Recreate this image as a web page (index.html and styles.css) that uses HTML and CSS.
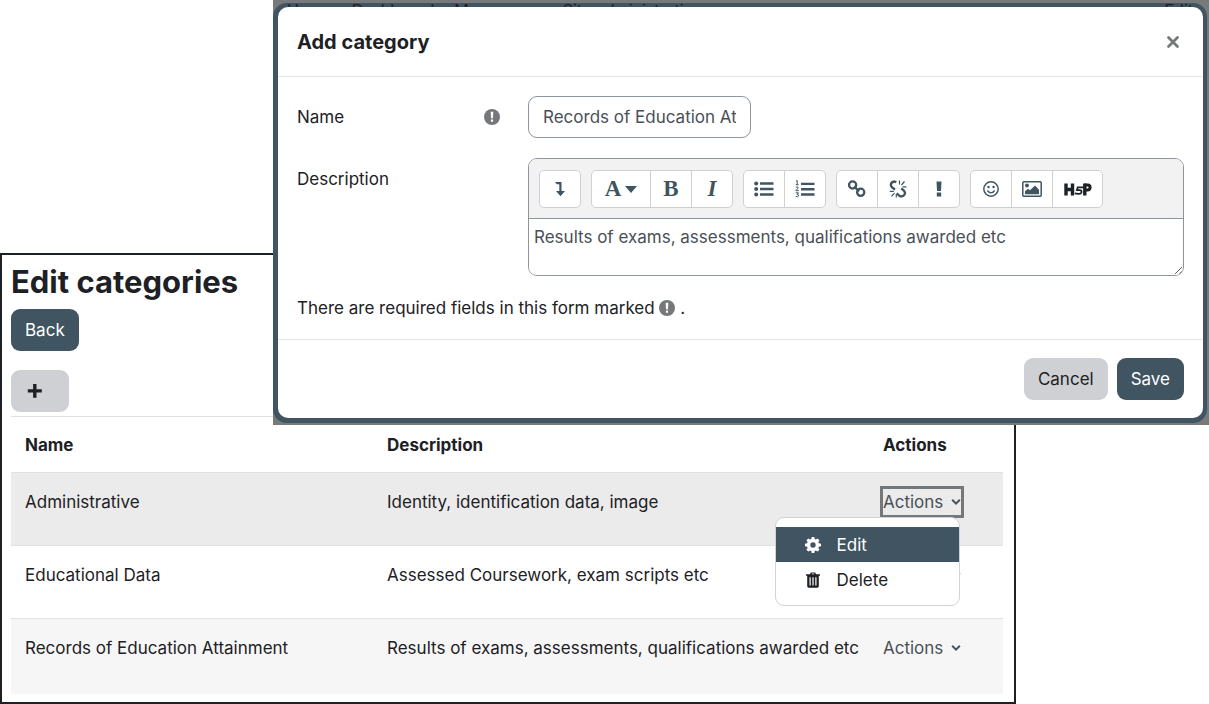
FILE: index.html
```
<!DOCTYPE html>
<html lang="en">
<head>
<meta charset="utf-8">
<title>Edit categories</title>
<link rel="stylesheet" href="styles.css">
</head>
<body>
<main class="page">
  <h1 class="page-title">Edit categories</h1>
  <button class="btn btn-primary" type="button">Back</button>
  <button class="btn btn-secondary btn-add" type="button" aria-label="Add category">
    <svg class="icon" viewBox="0 0 16 16"><path d="M6.100 1h3.400v5.200h5.300v3.400H9.500v5.200H6.100V9.600H.8V6.200h5.300z" fill="currentColor"/></svg>
  </button>
  <table class="categories">
    <thead>
      <tr><th class="col-name">Name</th><th class="col-desc">Description</th><th>Actions</th></tr>
    </thead>
    <tbody>
      <tr class="row-hover">
        <td>Administrative</td>
        <td>Identity, identification data, image</td>
        <td>
          <div class="dropdown">
            <button class="toggle toggle-focus" type="button" aria-expanded="true">Actions
              <svg class="chevron" viewBox="0 0 10 8"><path d="M1.200 1.800 5 5.600 8.800 1.800" fill="none" stroke="currentColor" stroke-width="2"/></svg></button>
            <div class="menu" role="menu">
              <a class="menu-item menu-item-active" href="#edit" role="menuitem">
                <svg class="icon" viewBox="0 0 16 16"><path fill="currentColor" fill-rule="evenodd" d="M6.700 0h2.600l.4 2.100 1.100.5L12.600 1.400l1.900 1.900-1.200 1.800.5 1.200 2.200.4v2.600l-2.200.4-.5 1.200 1.200 1.800-1.900 1.900-1.800-1.200-1.100.5L9.300 16H6.700l-.4-2.100-1.200-.5-1.800 1.200-1.900-1.900 1.200-1.800-.5-1.200L0 9.300V6.700l2.100-.4.5-1.200-1.200-1.800 1.900-1.900 1.800 1.200 1.200-.5zM8 5.300a2.700 2.700 0 1 0 0 5.400 2.700 2.700 0 0 0 0-5.400z"/></svg>
                Edit</a>
              <a class="menu-item" href="#delete" role="menuitem">
                <svg class="icon" viewBox="0 0 16 16"><path fill="currentColor" fill-rule="evenodd" d="M5 2.300 5.800.5h4.400l.8 1.800h4v1.500h-1.200v10.200q0 1.700-1.500 1.700H3.700q-1.500 0-1.500-1.700V3.800H1V2.300zm1.500 0h3L9 1.500H7zM4.500 5.200v8.300h1.200V5.200zm2.900 0v8.300h1.200V5.200zm2.900 0v8.300h1.200V5.200z"/></svg>
                Delete</a>
            </div>
          </div>
        </td>
      </tr>
      <tr>
        <td>Educational Data</td>
        <td>Assessed Coursework, exam scripts etc</td>
        <td><button class="toggle toggle-compact" type="button" aria-label="Actions">
          <svg class="chevron" viewBox="0 0 10 8"><path d="M1.200 1.800 5 5.600 8.800 1.800" fill="none" stroke="currentColor" stroke-width="2"/></svg></button></td>
      </tr>
      <tr class="row-odd">
        <td>Records of Education Attainment</td>
        <td>Results of exams, assessments, qualifications awarded etc</td>
        <td><button class="toggle" type="button">Actions
          <svg class="chevron" viewBox="0 0 10 8"><path d="M1.200 1.800 5 5.600 8.800 1.800" fill="none" stroke="currentColor" stroke-width="2"/></svg></button></td>
      </tr>
    </tbody>
  </table>
</main>

<div class="backdrop">
  <nav class="site-nav" aria-hidden="true"><span>Home</span><span>Dashboard</span><span>My courses</span><span>Site administration</span><span class="nav-end">Edit</span></nav>
  <div class="frame">
    <form class="modal" role="dialog" aria-labelledby="modal-title">
      <header class="modal-header">
        <h2 class="modal-title" id="modal-title">Add category</h2>
        <button class="close" type="button" aria-label="Close">
          <svg class="close-icon" viewBox="0 0 14 14"><path d="M2.500 2.500l9 9M11.500 2.500l-9 9" stroke="currentColor" stroke-width="2.800" stroke-linecap="round"/></svg>
        </button>
      </header>
      <div class="modal-body">
        <div class="field">
          <div class="field-label">
            <label for="name">Name</label>
            <svg class="required" viewBox="0 0 16 16"><circle cx="8" cy="8" r="8" fill="currentColor"/><path d="M6.700 2.800h2.600L9 9.300H7zM6.900 10.600h2.200v2.200H6.900z" fill="#fff"/></svg>
          </div>
          <input class="text-input" id="name" type="text" value="Records of Education Attainment">
        </div>
        <div class="field">
          <div class="field-label"><label for="desc">Description</label></div>
          <div class="editor">
            <div class="toolbar">
              <div class="group">
                <button class="tool" type="button" aria-label="Show more"><svg class="icon" viewBox="0 0 16 16"><path d="M3 1h6.500v9H13l-4.500 5.200L4 10h3.300V3.200H4.800z" fill="currentColor"/></svg></button>
              </div>
              <div class="group">
                <button class="tool tool-wide letter" type="button" aria-label="Paragraph styles">A<svg class="caret" viewBox="0 0 12 7"><path d="M0 0h12L6 7z" fill="currentColor"/></svg></button>
                <button class="tool letter" type="button" aria-label="Bold">B</button>
                <button class="tool letter italic" type="button" aria-label="Italic">I</button>
              </div>
              <div class="group">
                <button class="tool" type="button" aria-label="Bulleted list"><svg class="icon-lg" viewBox="0 0 20 18"><g fill="currentColor"><circle cx="2.200" cy="3.500" r="2"/><circle cx="2.200" cy="9" r="2"/><circle cx="2.200" cy="14.500" r="2"/><path d="M6 2.200h13.500v2.600H6zM6 7.700h13.500v2.600H6zM6 13.200h13.500v2.600H6z"/></g></svg></button>
                <button class="tool" type="button" aria-label="Numbered list"><svg class="icon-lg" viewBox="0 0 20 18"><path d="M6 2.700h13.500v2.400H6zM6 8h13.500v2.400H6zM6 13.300h13.500v2.400H6z" fill="currentColor"/><path d="M1 1.200l1.200-.7v4.200M.8 4.700h2.800M.8 7.200q2.600-1 2.400.8L.8 10.700h3M.8 12.800h2.700l-1.400 1.700q2 .1 1.500 1.500-.8 1.300-2.900.5" fill="none" stroke="currentColor"/></svg></button>
              </div>
              <div class="group">
                <button class="tool" type="button" aria-label="Link"><svg class="icon-lg" viewBox="0 0 20 18"><g fill="none" stroke="currentColor" stroke-width="2.300"><circle cx="5.600" cy="5" r="3.600"/><circle cx="13.700" cy="12.300" r="3.600"/><path d="M7 6.500l5.200 4.600"/></g></svg></button>
                <button class="tool" type="button" aria-label="Unlink"><svg class="icon-lg" viewBox="0 0 20 18"><g fill="none" stroke="currentColor"><path stroke-width="2.300" d="M8.300 2.300 6.400 1.500Q3 1.800 2.800 5q.2 1.500 1.500 2.500L7 9.700M8.800 13.200l2.400 2.500q2.500 1.500 4.600-.3 2.300-2.200.3-4.500l-2.800-2.500"/><path stroke-width="1.200" d="M11.500.5v4M16.500 1.500l-3 3.500M14.500 6.800h4M1.800 11.400h4M6.500 13.200l-3 3.200M8.300 14v3.500"/></g></svg></button>
                <button class="tool" type="button" aria-label="Warning"><svg class="icon" viewBox="0 0 16 16"><path d="M5.500.5h5L10 10H6zM5.800 11.500h4.400v4H5.800z" fill="currentColor"/></svg></button>
              </div>
              <div class="group">
                <button class="tool" type="button" aria-label="Emoji"><svg class="icon" viewBox="0 0 16 16"><circle cx="8" cy="8" r="7.200" fill="none" stroke="currentColor" stroke-width="1.500"/><circle cx="5.500" cy="6" r="1.200" fill="currentColor"/><circle cx="10.500" cy="6" r="1.200" fill="currentColor"/><path d="M4.300 9.500q3.700 4.600 7.400 0" fill="none" stroke="currentColor" stroke-width="1.300"/></svg></button>
                <button class="tool" type="button" aria-label="Image"><svg class="icon-lg" viewBox="0 0 20 18"><rect x=".8" y="1.800" width="18.400" height="14.400" rx="1" fill="none" stroke="currentColor" stroke-width="1.500"/><circle cx="5" cy="5.500" r="1.900" fill="currentColor"/><path d="M3 14.200v-3l3-2.500 2 1.600 5-4.800 4 4.200v4.500z" fill="currentColor"/></svg></button>
                <button class="tool tool-h5p" type="button" aria-label="H5P"><svg class="h5p" viewBox="0 0 28 14"><g fill="none" stroke="#1d2125"><path stroke-width="3.400" d="M2 1.500v12M8.500 1.500v12M2 7.500h6.500M20.800 1.500v12"/><path stroke-width="1.800" d="M20 5.300h-6.300l-.8 2.800h2.700q2.200.2 1.900 2.100-.5 2-3.200 1.700l-3.500-.5"/><path stroke-width="3" d="M20.500 3h3.300q2.300.2 2.300 2.500t-2.600 2.600h-3"/></g></svg></button>
              </div>
            </div>
            <textarea class="editor-text" id="desc">Results of exams, assessments, qualifications awarded etc</textarea>
          </div>
        </div>
        <p class="note">There are required fields in this form marked <svg class="required" viewBox="0 0 16 16"><circle cx="8" cy="8" r="8" fill="currentColor"/><path d="M6.700 2.800h2.600L9 9.300H7zM6.900 10.600h2.200v2.200H6.900z" fill="#fff"/></svg> <span>.</span></p>
      </div>
      <footer class="modal-footer">
        <button class="btn btn-secondary" type="button">Cancel</button>
        <button class="btn btn-primary" type="submit">Save</button>
      </footer>
    </form>
  </div>
</div>
</body>
</html>
```
FILE: styles.css
```
* { box-sizing: border-box; }

body {
  position: relative;
  margin: 0;
  padding-top: 253px;
  background: #fff;
  color: #1d2125;
  font: 17px/26px Inter, "Liberation Sans", sans-serif;
}

button, input, textarea { font: inherit; color: inherit; }
button { padding: 0; border: 0; background: none; }
svg { flex: none; }

.icon { width: 16px; height: 16px; }
.icon-lg { width: 20px; height: 18px; }

/* Category list */
.page {
  display: flex;
  flex-direction: column;
  align-items: flex-start;
  width: 84%;
  padding: 8px 11px 8px 9px;
  border: 2px solid #1d2125;
}

.page-title {
  margin: 0 0 9px;
  font-size: 31px;
  line-height: 37px;
  font-weight: 700;
}

.btn {
  height: 42px;
  padding: 0 14px;
  border-radius: 9px;
}
.btn-primary { background: #405561; color: #fff; }
.btn-secondary { background: #ced0d3; color: #1d2125; }
.btn-add {
  display: flex;
  align-items: center;
  width: 58px;
  margin: 19px 0 4px;
  padding: 0 16px;
}

.categories {
  width: 100%;
  table-layout: fixed;
  border-collapse: collapse;
}
.col-name { width: 362px; }
.col-desc { width: 496px; }
.categories th, .categories td {
  padding: 15px 0 14px 14px;
  border-top: 1px solid #dee2e6;
  text-align: left;
  vertical-align: top;
}
.categories th { font-weight: 700; }
.categories td { height: 73px; padding-top: 16px; }
.categories .row-hover td { background: #ebebeb; }
.categories .row-odd td { height: 75px; background: #f6f6f6; }

.dropdown { position: relative; }
.toggle {
  display: flex;
  align-items: center;
  gap: 8px;
  color: #495057;
  white-space: nowrap;
}
.toggle-focus { outline: 3px solid #75787b; }
.toggle-compact { justify-content: flex-end; width: 78px; height: 26px; }
.chevron { width: 10px; height: 8px; color: #405561; }

.menu {
  position: absolute;
  z-index: 2;
  top: 28px;
  right: 43px;
  width: 185px;
  padding: 9px 0 8px;
  border: 1px solid #ced4da;
  border-radius: 9px;
  background: #fff;
}
.menu-item {
  display: flex;
  align-items: center;
  gap: 16px;
  height: 35px;
  padding-left: 29px;
  color: #1d2125;
  text-decoration: none;
}
.menu-item-active { background: #405561; color: #fff; }

/* Dialog over the page */
.backdrop {
  position: absolute;
  top: 0;
  right: 0;
  left: 273px;
  padding: 3px 2px 2px 0;
  overflow: hidden;
  background: #77797b;
}
.site-nav {
  position: absolute;
  z-index: 1;
  top: 0;
  right: 16px;
  left: 14px;
  display: flex;
  gap: 20px;
  font-size: 16px;
  line-height: 20px;
}
.nav-end { margin-left: auto; }
.frame {
  padding: 4px 4px 5px 5px;
  border-radius: 14px;
  background: #405561;
}
.modal {
  position: relative;
  z-index: 2;
  border-radius: 10px;
  background: #fff;
}
.modal-header {
  display: flex;
  align-items: center;
  justify-content: space-between;
  height: 70px;
  padding: 0 23px 0 19px;
  border-bottom: 1px solid #e4e6e8;
}
.modal-title { margin: 0; font-size: 20px; line-height: 30px; font-weight: 700; }
.close { display: flex; color: #75787b; }
.close-icon { width: 14px; height: 14px; }

.modal-body { padding: 19px; }
.field {
  display: grid;
  grid-template-columns: 203px minmax(0, 1fr);
  column-gap: 28px;
  margin-bottom: 20px;
}
.field-label {
  display: flex;
  align-items: center;
  justify-content: space-between;
  height: 42px;
}
.required { width: 16px; height: 16px; color: #75787b; }
.text-input {
  width: 223px;
  height: 42px;
  padding: 0 14px;
  border: 1px solid #8f959e;
  border-radius: 9px;
  background: #fff;
  color: #495057;
}

.editor {
  overflow: hidden;
  border: 1px solid #8f959e;
  border-radius: 9px;
}
.toolbar {
  display: flex;
  gap: 10px;
  padding: 11px 10px 10px;
  border-bottom: 1px solid #8f959e;
  background: #f2f2f2;
}
.group {
  display: flex;
  overflow: hidden;
  border: 1px solid #ced0d3;
  border-radius: 5px;
  background: #fff;
}
.tool {
  display: flex;
  align-items: center;
  justify-content: center;
  width: 40px;
  height: 36px;
  color: #405561;
}
.tool + .tool { width: 41px; border-left: 1px solid #ced0d3; }
.tool-wide { gap: 4px; width: 58px; }
.tool + .tool-h5p { width: 50px; }
.letter { font: bold 23px/26px "Liberation Serif", serif; }
.italic { font-style: italic; }
.caret { width: 12px; height: 7px; }
.h5p { width: 28px; height: 14px; }
.editor-text {
  display: block;
  width: 100%;
  height: 56px;
  padding: 5px;
  border: 0;
  background: #fff;
  color: #495057;
}

.note { margin: 0; line-height: 24px; }
.note .required { vertical-align: -2px; }

.modal-footer {
  display: flex;
  justify-content: flex-end;
  gap: 9px;
  padding: 18px 19px;
  border-top: 1px solid #e4e6e8;
}
```
